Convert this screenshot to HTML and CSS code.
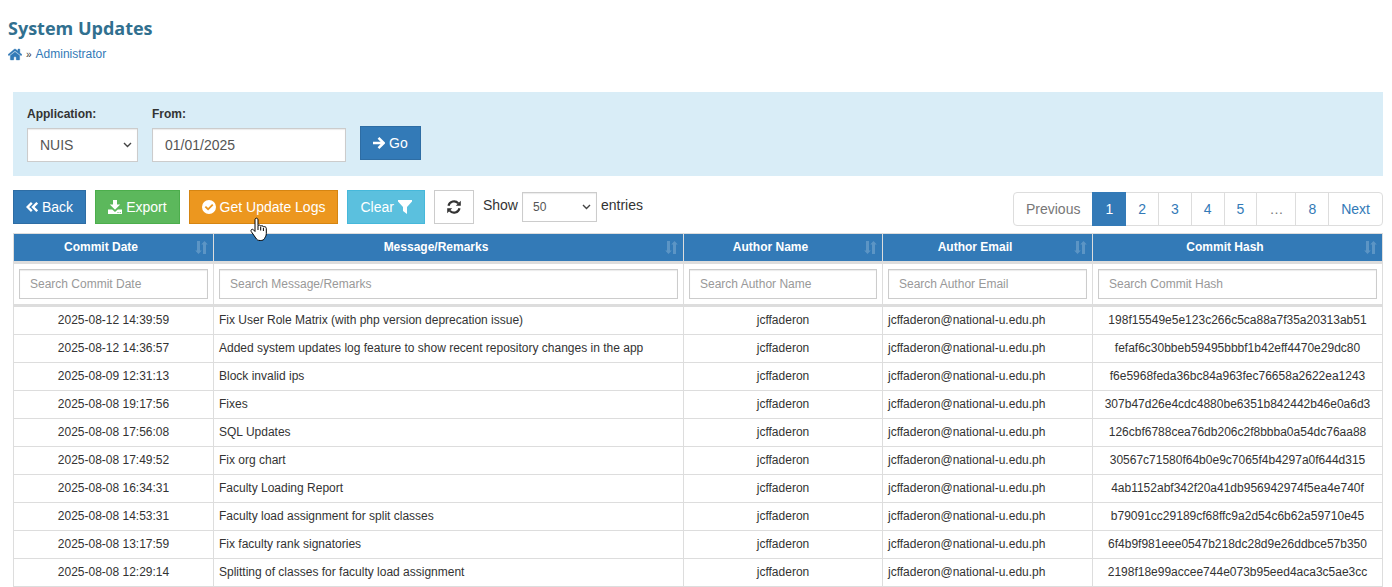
FILE: index.html
```html
<!DOCTYPE html>
<html lang="en">

<head>
  <meta charset="UTF-8">
  <meta name="viewport" content="width=device-width, initial-scale=1.0">
  <title>System Updates</title>
  <link rel="stylesheet" href="styles.css">
</head>

<body>
  <svg class="sprite" aria-hidden="true">
    <symbol id="home" viewBox="0 0 576 512">
      <path d="M280.37 148.26L96 300.11V464a16 16 0 0 0 16 16l112.06-.29a16 16 0 0 0 15.92-16V368a16 16 0 0 1 16-16h64a16 16 0 0 1 16 16v95.64a16 16 0 0 0 16 16.05L464 480a16 16 0 0 0 16-16V300L295.67 148.26a12.19 12.19 0 0 0-15.3 0zM571.6 251.47L488 182.56V44.05a12 12 0 0 0-12-12h-56a12 12 0 0 0-12 12v72.61L318.47 43a48 48 0 0 0-61 0L4.34 251.47a12 12 0 0 0-1.6 16.9l25.5 31A12 12 0 0 0 45.15 301l235.22-193.74a12.19 12.19 0 0 1 15.3 0L530.9 301a12 12 0 0 0 16.9-1.6l25.5-31a12 12 0 0 0-1.7-16.93z" stroke="currentColor" stroke-width="16"/>
    </symbol>
    <symbol id="arrow-right" viewBox="0 0 12 14">
      <path d="M0 7h10M5.500 1.800L10.700 7l-5.200 5.200" fill="none" stroke="currentColor" stroke-width="2.500"/>
    </symbol>
    <symbol id="angles-left" viewBox="0 0 12 14">
      <path d="M5.800 2.800L1.600 7l4.200 4.200M11.200 2.800L7 7l4.200 4.200" fill="none" stroke="currentColor" stroke-width="2.400"/>
    </symbol>
    <symbol id="download" viewBox="0 0 14 14">
      <path d="M5 0h4v4.500h3.200L7 9.700l-5.200-5.200H5zM0 9.500h4.200L7 12l2.800-2.500H14V14H0zM9.500 12v1h1v-1zM11.700 12v1h1v-1z" fill-rule="evenodd"/>
    </symbol>
    <symbol id="check-circle" viewBox="0 0 14 14">
      <path d="M7 0a7 7 0 1 0 0 14A7 7 0 0 0 7 0zM2.700 7.200l1.300-1.300 2.100 2.100 4-4 1.300 1.300-5.300 5.300z" fill-rule="evenodd"/>
    </symbol>
    <symbol id="filter" viewBox="0 0 14 14">
      <path d="M0 0h14v1.500L9 7v7l-4-3V7L0 1.500z"/>
    </symbol>
    <symbol id="refresh" viewBox="0 0 14 14">
      <path d="M1.500 5.800A5.600 5.600 0 0 1 11.300 3.400M12.500 8.200A5.600 5.600 0 0 1 2.700 10.600" fill="none" stroke="currentColor" stroke-width="2.200"/>
      <path d="M13.800 .8v5h-5zM.2 13.200v-5h5z"/>
    </symbol>
    <symbol id="sort" viewBox="0 0 13 13">
      <path d="M2 0h3v9.500h1.800L3.500 13 .2 9.500H2zM8 13h3V3.500h1.800L9.500 0 6.200 3.500H8z"/>
    </symbol>
  </svg>

  <header>
    <h1>System Updates</h1>
    <nav class="breadcrumb" aria-label="Breadcrumb">
      <a href="#" aria-label="Home"><svg class="icon-home"><use href="#home"/></svg></a>
      <span class="separator">»</span>
      <a href="#">Administrator</a>
    </nav>
  </header>

  <main>
    <form class="filters">
      <div class="field">
        <label for="application">Application:</label>
        <select class="control application" id="application">
          <option>NUIS</option>
        </select>
      </div>
      <div class="field">
        <label for="from">From:</label>
        <input class="control from" id="from" type="text" value="01/01/2025">
      </div>
      <button class="btn btn-primary" type="button"><svg class="icon icon-narrow"><use href="#arrow-right"/></svg>Go</button>
    </form>

    <div class="toolbar">
      <button class="btn btn-primary" type="button"><svg class="icon icon-narrow"><use href="#angles-left"/></svg>Back</button>
      <button class="btn btn-success" type="button"><svg class="icon"><use href="#download"/></svg>Export</button>
      <button class="btn btn-warning" type="button"><svg class="icon"><use href="#check-circle"/></svg>Get Update Logs
        <svg class="pointer" viewBox="0 0 18 25" aria-hidden="true">
          <path d="M5.500 1.500c1.200-.8 2.500 0 2.500 1.300v6c.6-1.200 2.600-.9 2.700.5.700-1 2.500-.7 2.700.7.900-.8 2.900-.2 2.900 1.300v5.200c0 2.500-1 3.300-1.800 5-.6 1.400-2 2-4.200 2-2.500 0-3.500-.8-4.600-2.600L1.200 14.500c-.8-1.700.9-3 2.300-1.700L5 14.500V2.800c0-.6.100-1 .5-1.300z" fill="#fff" stroke="#000" stroke-linejoin="round"/>
          <path d="M8 9v4M10.700 10v3.500M13.400 11v3" fill="none" stroke="#000"/>
        </svg>
      </button>
      <button class="btn btn-info" type="button">Clear<svg class="icon"><use href="#filter"/></svg></button>
      <button class="btn btn-default" type="button" aria-label="Refresh"><svg class="icon"><use href="#refresh"/></svg></button>
      <label class="length">Show
        <select class="control control-sm">
          <option>50</option>
        </select>
        entries
      </label>
      <nav class="pagination" aria-label="Pages">
        <a class="disabled" href="#">Previous</a>
        <a class="active" href="#" aria-current="page">1</a>
        <a href="#">2</a>
        <a href="#">3</a>
        <a href="#">4</a>
        <a href="#">5</a>
        <a class="disabled" href="#">…</a>
        <a href="#">8</a>
        <a href="#">Next</a>
      </nav>
    </div>

    <table>
      <colgroup>
        <col class="col-date">
        <col>
        <col class="col-author">
        <col class="col-email">
        <col class="col-hash">
      </colgroup>
      <thead>
        <tr class="titles">
          <th><div class="title"><span>Commit Date</span><svg><use href="#sort"/></svg></div></th>
          <th><div class="title"><span>Message/Remarks</span><svg><use href="#sort"/></svg></div></th>
          <th><div class="title"><span>Author Name</span><svg><use href="#sort"/></svg></div></th>
          <th><div class="title"><span>Author Email</span><svg><use href="#sort"/></svg></div></th>
          <th><div class="title"><span>Commit Hash</span><svg><use href="#sort"/></svg></div></th>
        </tr>
        <tr>
          <th><input class="control control-sm" type="text" placeholder="Search Commit Date" aria-label="Search Commit Date"></th>
          <th><input class="control control-sm" type="text" placeholder="Search Message/Remarks" aria-label="Search Message/Remarks"></th>
          <th><input class="control control-sm" type="text" placeholder="Search Author Name" aria-label="Search Author Name"></th>
          <th><input class="control control-sm" type="text" placeholder="Search Author Email" aria-label="Search Author Email"></th>
          <th><input class="control control-sm" type="text" placeholder="Search Commit Hash" aria-label="Search Commit Hash"></th>
        </tr>
      </thead>
      <tbody>
        <tr><td>2025-08-12 14:39:59</td><td>Fix User Role Matrix (with php version deprecation issue)</td><td>jcffaderon</td><td>jcffaderon@national-u.edu.ph</td><td>198f15549e5e123c266c5ca88a7f35a20313ab51</td></tr>
        <tr><td>2025-08-12 14:36:57</td><td>Added system updates log feature to show recent repository changes in the app</td><td>jcffaderon</td><td>jcffaderon@national-u.edu.ph</td><td>fefaf6c30bbeb59495bbbf1b42eff4470e29dc80</td></tr>
        <tr><td>2025-08-09 12:31:13</td><td>Block invalid ips</td><td>jcffaderon</td><td>jcffaderon@national-u.edu.ph</td><td>f6e5968feda36bc84a963fec76658a2622ea1243</td></tr>
        <tr><td>2025-08-08 19:17:56</td><td>Fixes</td><td>jcffaderon</td><td>jcffaderon@national-u.edu.ph</td><td>307b47d26e4cdc4880be6351b842442b46e0a6d3</td></tr>
        <tr><td>2025-08-08 17:56:08</td><td>SQL Updates</td><td>jcffaderon</td><td>jcffaderon@national-u.edu.ph</td><td>126cbf6788cea76db206c2f8bbba0a54dc76aa88</td></tr>
        <tr><td>2025-08-08 17:49:52</td><td>Fix org chart</td><td>jcffaderon</td><td>jcffaderon@national-u.edu.ph</td><td>30567c71580f64b0e9c7065f4b4297a0f644d315</td></tr>
        <tr><td>2025-08-08 16:34:31</td><td>Faculty Loading Report</td><td>jcffaderon</td><td>jcffaderon@national-u.edu.ph</td><td>4ab1152abf342f20a41db956942974f5ea4e740f</td></tr>
        <tr><td>2025-08-08 14:53:31</td><td>Faculty load assignment for split classes</td><td>jcffaderon</td><td>jcffaderon@national-u.edu.ph</td><td>b79091cc29189cf68ffc9a2d54c6b62a59710e45</td></tr>
        <tr><td>2025-08-08 13:17:59</td><td>Fix faculty rank signatories</td><td>jcffaderon</td><td>jcffaderon@national-u.edu.ph</td><td>6f4b9f981eee0547b218dc28d9e26ddbce57b350</td></tr>
        <tr><td>2025-08-08 12:29:14</td><td>Splitting of classes for faculty load assignment</td><td>jcffaderon</td><td>jcffaderon@national-u.edu.ph</td><td>2198f18e99accee744e073b95eed4aca3c5ae3cc</td></tr>
      </tbody>
    </table>
  </main>
</body>

</html>
```
FILE: styles.css
```css
* {
  box-sizing: border-box;
}

body {
  margin: 0;
  padding: 16px 8px 0;
  font-family: "Liberation Sans", Arial, sans-serif;
  font-size: 12px;
  line-height: 17px;
  color: #333;
  background: #fff;
}

.sprite {
  display: none;
}

svg {
  fill: currentColor;
}

a {
  color: #337ab7;
  text-decoration: none;
}

h1 {
  margin: 0;
  font-family: "Open Sans", "Noto Sans", sans-serif;
  font-weight: 700;
  font-size: 18px;
  line-height: 24px;
  color: #31708f;
}

.breadcrumb {
  display: flex;
  align-items: center;
  gap: 4px;
  margin-top: 6px;
}

.separator {
  font-size: 10px;
}

.icon-home {
  display: block;
  width: 14px;
  height: 13px;
}

main {
  padding: 0 1px 0 5px;
  margin-top: 29px;
}

.filters {
  display: flex;
  align-items: flex-end;
  gap: 14px;
  padding: 14px;
  background: #d9edf7;
}

.filters .btn {
  margin-bottom: 2px;
}

.field {
  display: flex;
  flex-direction: column;
  gap: 5px;
}

.field label {
  font-weight: 700;
}

.control {
  width: 100%;
  height: 34px;
  padding: 6px 12px;
  border: 1px solid #ccc;
  border-radius: 0;
  background: #fff;
  box-shadow: inset 0 1px 1px rgb(0 0 0 / 8%);
  font-family: inherit;
  font-size: 14px;
  color: #555;
}

.control::placeholder {
  color: #999;
  opacity: 1;
}

select.control {
  appearance: none;
  background: #fff url("data:image/svg+xml,%3Csvg xmlns='http://www.w3.org/2000/svg' width='9' height='6'%3E%3Cpath d='M1 1l3.500 3.500L8 1' fill='none' stroke='%23444' stroke-width='1.400'/%3E%3C/svg%3E") no-repeat right 5px center;
}

.application {
  width: 111px;
}

.from {
  width: 194px;
}

.control-sm {
  height: 30px;
  padding: 5px 10px;
  font-size: 12px;
}

.btn {
  display: inline-flex;
  align-items: center;
  gap: 4px;
  height: 34px;
  padding: 6px 12px;
  border: 1px solid;
  font-family: inherit;
  font-size: 14px;
  line-height: 20px;
  color: #fff;
  white-space: nowrap;
  cursor: pointer;
}

.icon {
  width: 14px;
  height: 14px;
}

.icon-narrow {
  width: 12px;
}

.btn-primary {
  background: #337ab7;
  border-color: #2e6da4;
}

.btn-success {
  background: #5cb85c;
  border-color: #4cae4c;
}

.btn-warning {
  position: relative;
  background: #ec971f;
  border-color: #d58512;
}

.btn-info {
  background: #5bc0de;
  border-color: #46b8da;
}

.btn-default {
  background: #fff;
  border-color: #ccc;
  color: #333;
}

.pointer {
  position: absolute;
  left: 60px;
  top: 26px;
  width: 18px;
  height: 25px;
}

.toolbar {
  display: flex;
  align-items: flex-start;
  gap: 9px;
  margin: 14px 0 7px;
}

.length {
  display: flex;
  gap: 4px;
  margin-top: 2px;
  font-size: 14px;
  line-height: 26px;
}

.length .control {
  width: 75px;
}

.pagination {
  display: flex;
  margin: 2px 0 0 auto;
  line-height: 20px;
  font-size: 14px;
}

.pagination a {
  padding: 6px 12px;
  margin-left: -1px;
  border: 1px solid #ddd;
}

.pagination a:first-child {
  border-radius: 4px 0 0 4px;
}

.pagination a:last-child {
  border-radius: 0 4px 4px 0;
}

.pagination .disabled {
  color: #777;
}

.pagination .active {
  z-index: 1;
  background: #337ab7;
  border-color: #337ab7;
  color: #fff;
}

table {
  width: 100%;
  table-layout: fixed;
  border: 0 solid #ddd;
  border-width: 1px 0 0 1px;
  border-spacing: 0;
}

.col-date {
  width: 200px;
}

.col-author {
  width: 199px;
}

.col-email {
  width: 210px;
}

.col-hash {
  width: 290px;
}

th,
td {
  padding: 5px;
  border: 0 solid #ddd;
  border-width: 0 1px 1px 0;
}

th {
  border-bottom-width: 3px;
}

td {
  text-align: center;
}

td:nth-child(2),
td:nth-child(4) {
  text-align: left;
}

th .control {
  display: block;
}

.titles th {
  background: #337ab7;
  background-clip: padding-box;
  color: #fff;
}

.title {
  display: flex;
  align-items: center;
  gap: 12px;
}

.title span {
  flex: 1;
}

.title svg {
  width: 13px;
  height: 13px;
  opacity: 0.2;
}
```
